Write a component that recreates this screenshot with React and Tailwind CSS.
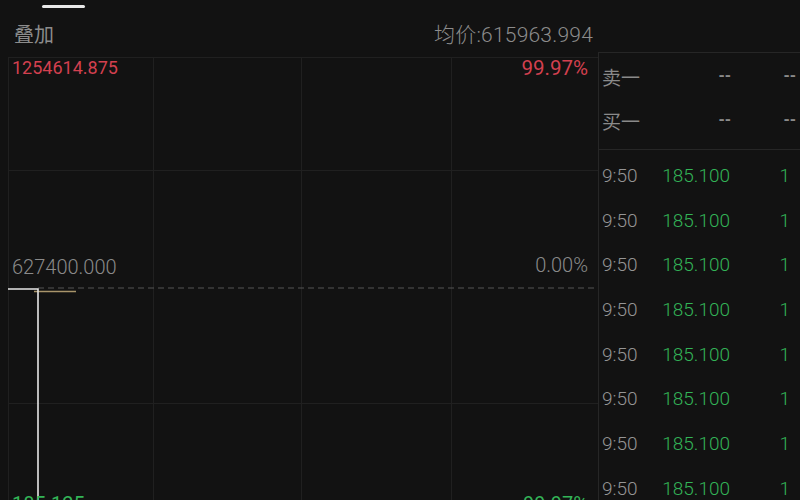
import React from 'react';

const num = { fontFamily: 'Roboto, "Liberation Sans", sans-serif' };
const cjk = { fontFamily: '"Noto Sans CJK SC", "Noto Sans", sans-serif' };

const trades = Array.from({ length: 8 }, () => ({ time: '9:50', price: '185.100', vol: '1' }));

const ChartGrid = () => (
  <svg width={590} height={443} className="absolute left-0 top-0">
    {/* grid */}
    {[0.5, 145.5, 293.5, 443.5].map((x) => (
      <line key={x} x1={x} y1={0} x2={x} y2={443} stroke="#202020" strokeWidth={1} />
    ))}
    {[0.5, 113.5, 346.5].map((y) => (
      <line key={y} x1={0} y1={y} x2={590} y2={y} stroke="#202020" strokeWidth={1} />
    ))}
    {/* prev close dashed */}
    <line x1={30} y1={231} x2={590} y2={231} stroke="#555" strokeWidth={1.2} strokeDasharray="6 4" />
    {/* avg price */}
    <line x1={26} y1={234.5} x2={68} y2={234.5} stroke="#a8946a" strokeWidth={1.5} />
    {/* price line */}
    <path d="M0 232 H30 V443" fill="none" stroke="#e6e6e6" strokeWidth={1.6} />
  </svg>
);

export default function App() {
  return (
    <div className="w-[800px] h-[500px] overflow-hidden bg-[#121212] flex flex-col select-none">
      {/* header */}
      <div className="h-[52px] flex flex-col shrink-0">
        <div className="h-[10px] pt-[5px] pl-[42px]">
          <div className="w-[43px] h-[3px] rounded-full bg-[#e8e8e8]" />
        </div>
        <div className="flex-1 flex items-center justify-between pl-[14px] pr-[207px] pt-[6px]">
          <span className="text-[20px] leading-none text-[#8c8c8c]" style={cjk}>叠加</span>
          <span className="text-[21px] leading-none text-[#8c8c8c] font-light tracking-[0.2px]" style={num}>
            <span style={cjk}>均价</span>:615963.994
          </span>
        </div>
      </div>

      {/* body */}
      <div className="flex-1 flex">
        {/* chart */}
        <div className="ml-[8px] mt-[5px] w-[590px] relative">
          <ChartGrid />
          <span className="absolute left-[4px] top-[2px] text-[18px] leading-none text-[#d3404f]" style={num}>1254614.875</span>
          <span className="absolute right-[10px] top-[1px] text-[20.5px] leading-none text-[#d3404f]" style={num}>99.97%</span>
          <span className="absolute left-[4px] top-[200px] text-[20px] leading-none text-[#8a8a8a] font-light" style={num}>627400.000</span>
          <span className="absolute right-[10px] top-[198px] text-[20px] leading-none text-[#8a8a8a] font-light" style={num}>0.00%</span>
          <span className="absolute left-[4px] top-[437px] text-[20px] leading-none text-[#33b457]" style={num}>185.125</span>
          <span className="absolute right-[10px] top-[437px] text-[20px] leading-none text-[#33b457]" style={num}>-99.97%</span>
        </div>

        {/* order book + ticks */}
        <div className="w-[202px] border-l border-t border-[#262626] flex flex-col">
          <div className="pt-[1px] pb-[7px] border-b border-[#262626]">
            {['卖一', '买一'].map((label) => (
              <div key={label} className="h-[44px] flex items-center text-[#8a8a8a]">
                <span className="w-[60px] pl-[3px] text-[19px] leading-none" style={cjk}>{label}</span>
                <span className="w-[72px] text-right text-[16px] leading-none font-bold" style={num}>--</span>
                <span className="flex-1 pr-[4px] text-right text-[16px] leading-none font-bold" style={num}>--</span>
              </div>
            ))}
          </div>
          <div className="pt-[3px]">
            {trades.map((t, i) => (
              <div key={i} className="h-[44.7px] flex items-center text-[19px] leading-none" style={num}>
                <span className="w-[60px] pl-[3px] text-[#959595] font-light">{t.time}</span>
                <span className="w-[71px] text-right text-[#33b457] font-light">{t.price}</span>
                <span className="flex-1 pr-[10px] text-right text-[#33b457] font-light">{t.vol}</span>
              </div>
            ))}
          </div>
        </div>
      </div>
    </div>
  );
}
